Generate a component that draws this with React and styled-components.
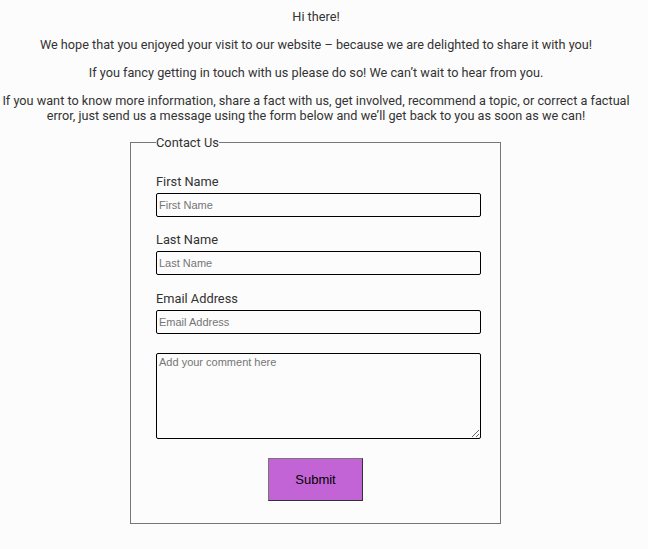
import React from "react";
import styled, { createGlobalStyle } from "styled-components";

const GlobalStyle = createGlobalStyle`
  html, body {
    margin: 0;
    padding: 0;
    background: #fcfcfc;
  }
  body {
    font-family: Roboto, "Liberation Sans", sans-serif;
    color: #333;
  }
`;

const Page = styled.div`
  width: 632px;
  padding-top: 9px;
  padding-bottom: 20px;
`;

const Intro = styled.p`
  margin: 0 -3px 13px;
  font-size: 12.7px;
  line-height: 15px;
  text-align: center;
`;

const Fieldset = styled.fieldset`
  box-sizing: border-box;
  width: 371px;
  margin: -1px 0 0 130px;
  padding: 24px 0 22px;
  border: 1px solid #767676;
  min-inline-size: 0;
`;

const Legend = styled.legend`
  font-size: 12.8px;
  line-height: 15px;
  padding: 0;
  margin-left: 25px;
  color: #333;
`;

const Fields = styled.div`
  display: flex;
  flex-direction: column;
  padding-left: 25px;
`;

const Field = styled.div`
  display: flex;
  flex-direction: column;
  gap: 4px;
  margin-bottom: 15.3px;
`;

const Label = styled.label`
  font-size: 12.8px;
  line-height: 15px;
  color: #333;
`;

const Input = styled.input`
  box-sizing: border-box;
  width: 325px;
  height: 24px;
  margin: 0;
  padding: 1px 2px;
  border: 1px solid #000;
  border-radius: 2px;
  background: #fcfcfc;
  font-family: "Liberation Sans", Arial, sans-serif;
  font-size: 11px;
  &::placeholder {
    color: #757575;
  }
`;

const Comment = styled.textarea`
  box-sizing: border-box;
  width: 325px;
  height: 86px;
  margin: 4px 0 0;
  padding: 2px 2px;
  border: 1px solid #000;
  border-radius: 2px;
  background: #fcfcfc;
  font-family: "Liberation Sans", Arial, sans-serif;
  font-size: 11px;
  &::placeholder {
    color: #757575;
  }
`;

const Actions = styled.div`
  display: flex;
  justify-content: center;
  margin-top: 19px;
`;

const SubmitButton = styled.button`
  box-sizing: border-box;
  width: 95px;
  height: 43px;
  background: #c264d6;
  border: 1px solid;
  border-color: #767676 #333 #333 #767676;
  font-family: "Liberation Sans", Arial, sans-serif;
  font-size: 13px;
  color: #000;
  cursor: pointer;
`;

const fields = [
  { id: "first", label: "First Name", type: "text" },
  { id: "last", label: "Last Name", type: "text" },
  { id: "email", label: "Email Address", type: "email" },
];

export default function App() {
  return (
    <>
      <GlobalStyle />
      <Page>
        <Intro>Hi there!</Intro>
        <Intro>
          We hope that you enjoyed your visit to our website – because we are
          delighted to share it with you!
        </Intro>
        <Intro>
          If you fancy getting in touch with us please do so! We can’t wait to
          hear from you.
        </Intro>
        <Intro>
          If you want to know more information, share a fact with us, get
          involved, recommend a topic, or correct a factual error, just send us
          a message using the form below and we’ll get back to you as soon as
          we can!
        </Intro>
        <form onSubmit={(e) => e.preventDefault()}>
          <Fieldset>
            <Legend>Contact Us</Legend>
            <Fields>
              {fields.map((f) => (
                <Field key={f.id}>
                  <Label htmlFor={f.id}>{f.label}</Label>
                  <Input id={f.id} type={f.type} placeholder={f.label} />
                </Field>
              ))}
              <Comment placeholder="Add your comment here" />
            </Fields>
            <Actions>
              <SubmitButton type="submit">Submit</SubmitButton>
            </Actions>
          </Fieldset>
        </form>
      </Page>
    </>
  );
}
